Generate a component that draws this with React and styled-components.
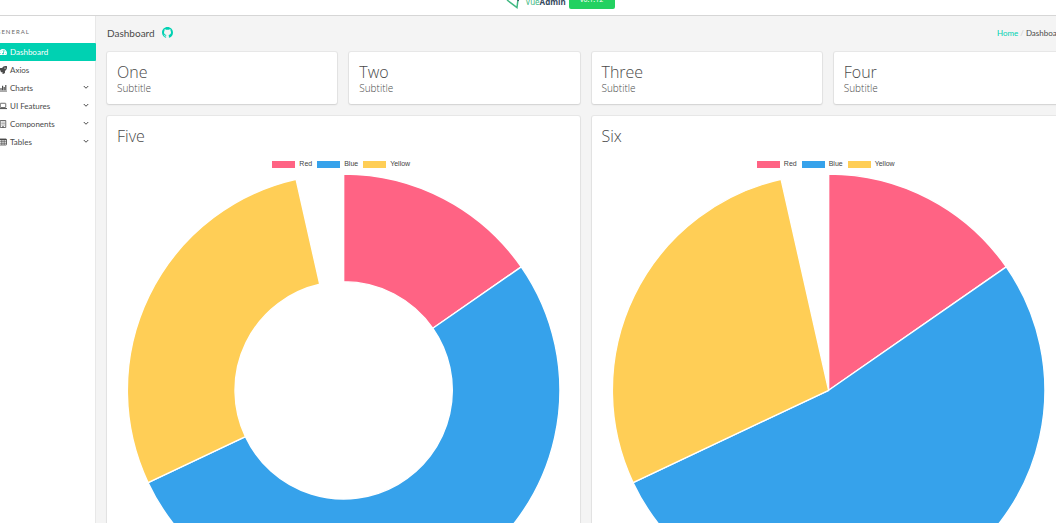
import React from "react";
import styled, { createGlobalStyle } from "styled-components";
import { FaTachometerAlt, FaRocket } from "react-icons/fa";

const GlobalStyle = createGlobalStyle`
  *, *::before, *::after { box-sizing: border-box; }
  body {
    margin: 0;
    background: #fff;
    color: #4a4a4a;
    font-family: Lato, "Noto Sans", sans-serif;
    font-size: 8px;
    overflow: hidden;
  }
  h1, h2, p, ul, ol { margin: 0; padding: 0; list-style: none; }
  a { text-decoration: none; color: inherit; }
`;

const Shell = styled.div`
  display: flex;
  flex-direction: column;
  height: 100vh;
  overflow: hidden;
`;

const Header = styled.header`
  flex: none;
  display: flex;
  justify-content: center;
  align-items: flex-end;
  height: 16px;
  padding: 0 0 6px 65px;
  background: #fff;
  border-bottom: 1px solid #d6d6d6;
`;

const Brand = styled.a`
  display: flex;
  align-items: flex-end;
  gap: 3px;
  font-family: "Noto Sans", sans-serif;
  line-height: 14px;
  color: #42b983;
  svg { display: block; }
  strong { color: #35495e; font-weight: 700; }
`;

const Version = styled.span`
  flex: none;
  width: 46px;
  height: 19px;
  border-radius: 2px;
  background: #23d160;
  color: #fff;
  font-size: 7px;
  line-height: 20px;
  text-align: center;
`;

const Body = styled.div`
  flex: 1;
  min-height: 0;
  display: flex;
  overflow: hidden;
`;

const Sidebar = styled.aside`
  flex: none;
  width: 96px;
  padding-top: 10px;
  background: #fff;
  box-shadow: inset -1px 0 0 #e8e8e8;
`;

const MenuLabel = styled.p`
  margin-left: -4px;
  height: 17px;
  font-size: 6px;
  line-height: 12px;
  letter-spacing: 1px;
  color: #6a6a6a;
  text-transform: uppercase;
`;

const MenuLink = styled.a`
  display: flex;
  align-items: center;
  gap: 3px;
  height: 18px;
  margin-left: -1px;
  padding-right: 6px;
  background: ${(p) => (p.$active ? "#00d1b2" : "transparent")};
  color: ${(p) => (p.$active ? "#fff" : "#4a4a4a")};
  border-radius: 1px;
  svg { flex: none; }
  span { flex: 1; }
`;

const Main = styled.main`
  flex: 1;
  min-width: 0;
  margin-right: -8px;
  padding: 0 0 0 11px;
  background: #f4f4f4;
`;

const TitleBar = styled.div`
  display: flex;
  align-items: center;
  justify-content: space-between;
  height: 36px;
  padding: 0 0 3px;
`;

const PageTitle = styled.h1`
  display: flex;
  align-items: center;
  gap: 7px;
  font-size: 10px;
  font-weight: 400;
  a { display: flex; color: #00d1b2; }
`;

const Crumbs = styled.ol`
  display: flex;
  gap: 2px;
  li + li::before { content: "/"; margin-right: 2px; color: #cfcfcf; }
  a { color: #00d1b2; }
`;

const Grid = styled.div`
  display: grid;
  grid-template-columns: repeat(4, 1fr);
  gap: 12px;
`;

const Card = styled.article`
  grid-column: span ${(p) => p.$span || 1};
  padding: 10px;
  background: #fff;
  border-radius: 2px;
  font-family: "Open Sans", "Noto Sans", sans-serif;
  box-shadow: 0 1px 2px rgba(10, 10, 10, 0.1), 0 0 0 1px rgba(10, 10, 10, 0.05);
`;

const CardTitle = styled.h2`
  font-size: 16px;
  font-weight: 300;
  line-height: 20px;
`;

const Subtitle = styled.p`
  font-size: 10px;
  font-weight: 300;
  line-height: 12px;
`;

const Legend = styled.ul`
  display: flex;
  justify-content: center;
  gap: 5px;
  margin: 12px 4px 4px 0;
  font-family: "Liberation Sans", sans-serif;
  font-size: 7px;
  line-height: 12px;
  color: #444;
`;

const LegendItem = styled.li`
  display: flex;
  align-items: center;
  gap: 4px;
  &::before { content: ""; width: 23px; height: 7px; background: ${(p) => p.$color}; }
`;

const Plot = styled.svg`
  display: block;
  width: 100%;
`;

const Footer = styled.footer`
  flex: none;
  height: 4px;
  background: #fff;
`;

function LineIcon({ size = 8, children }) {
  return (
    <svg width={size} height={size} viewBox="0 0 16 16" fill="none" stroke="currentColor" strokeWidth="1.600" aria-hidden="true">
      {children}
    </svg>
  );
}

function ChartIcon() {
  return (
    <LineIcon>
      <path d="M0.800 1V14.200H16" />
      <path d="M4 12.500V8M7.200 12.500V3.500M10.400 12.500V6M13.600 12.500V2" strokeWidth="2.300" />
    </LineIcon>
  );
}

function LaptopIcon() {
  return (
    <LineIcon>
      <rect x="2.500" y="2.500" width="11" height="8.500" rx="1" />
      <path d="M0 13.200H16" strokeWidth="2" />
    </LineIcon>
  );
}

function BuildingIcon() {
  return (
    <LineIcon>
      <path d="M2.500 1H13.500V15H2.500Z" />
      <path d="M5.200 4.200H11M5.200 7.200H11M5.200 10.200H11" strokeDasharray="1.400 0.800" />
      <path d="M8 12V15" strokeWidth="2.400" />
    </LineIcon>
  );
}

function TableIcon() {
  return (
    <LineIcon>
      <rect x="1" y="2" width="14" height="12" rx="1" />
      <path d="M1 3.200H15" strokeWidth="2.600" />
      <path d="M1 7.300H15M1 10.600H15M5.600 3V14M10.400 3V14" strokeWidth="1.300" />
    </LineIcon>
  );
}

function ChevronIcon() {
  return (
    <LineIcon>
      <path d="M3.500 4L8 8.500L12.500 4" strokeWidth="2" />
    </LineIcon>
  );
}

function GithubMark() {
  return (
    <svg width="11" height="11" viewBox="0 0 16 16" fill="currentColor" aria-hidden="true">
      <path d="M8 0C3.58 0 0 3.58 0 8c0 3.54 2.29 6.53 5.47 7.59.4.07.55-.17.55-.38 0-.19-.01-.82-.01-1.49-2.01.37-2.53-.49-2.69-.94-.09-.23-.48-.94-.82-1.13-.28-.15-.68-.52-.01-.53.63-.01 1.08.58 1.23.82.72 1.21 1.87.87 2.33.66.07-.52.28-.87.51-1.07-1.78-.2-3.64-.89-3.64-3.95 0-.87.31-1.59.82-2.15-.08-.2-.36-1.02.08-2.12 0 0 .67-.21 2.2.82a7.6 7.6 0 0 1 4 0c1.53-1.04 2.2-.82 2.2-.82.44 1.1.16 1.92.08 2.12.51.56.82 1.27.82 2.15 0 3.07-1.87 3.75-3.65 3.95.29.25.54.73.54 1.48 0 1.07-.01 1.93-.01 2.2 0 .21.15.46.55.38A8.01 8.01 0 0 0 16 8c0-4.42-3.58-8-8-8z" />
    </svg>
  );
}

const MENU = [
  { label: "Dashboard", icon: FaTachometerAlt, active: true },
  { label: "Axios", icon: FaRocket },
  { label: "Charts", icon: ChartIcon, nested: true },
  { label: "UI Features", icon: LaptopIcon, nested: true },
  { label: "Components", icon: BuildingIcon, nested: true },
  { label: "Tables", icon: TableIcon, nested: true },
];

const SLICES = [
  { label: "Red", color: "#ff6384", from: 0, to: 55.2 },
  { label: "Blue", color: "#36a2eb", from: 55.2, to: 244.7 },
  { label: "Yellow", color: "#ffce56", from: 244.7, to: 347.3 },
];

const CX = 227.4;
const CY = 217;
const R = 217;

function point(radius, degrees) {
  const a = (degrees * Math.PI) / 180;
  return `${(CX + radius * Math.sin(a)).toFixed(2)} ${(CY - radius * Math.cos(a)).toFixed(2)}`;
}

function slicePath({ from, to }, inner) {
  const large = to - from > 180 ? 1 : 0;
  const outer = `M${point(R, from)}A${R} ${R} 0 ${large} 1 ${point(R, to)}`;
  if (!inner) return `${outer}L${CX} ${CY}Z`;
  return `${outer}L${point(inner, to)}A${inner} ${inner} 0 ${large} 0 ${point(inner, from)}Z`;
}

function Chart({ name, inner = 0 }) {
  return (
    <>
      <Legend>
        {SLICES.map((s) => (
          <LegendItem key={s.label} $color={s.color}>{s.label}</LegendItem>
        ))}
      </Legend>
      <Plot viewBox="0 0 454 434" role="img" aria-label={name}>
        {SLICES.map((s) => (
          <path key={s.label} d={slicePath(s, inner)} fill={s.color} stroke="#fff" strokeWidth="1.4" strokeLinejoin="bevel" />
        ))}
      </Plot>
    </>
  );
}

export default function App() {
  return (
    <Shell>
      <GlobalStyle />
      <Header>
        <Brand href="#">
          <svg width="16" height="14" viewBox="0 0 16 14" fill="none" aria-hidden="true">
            <path d="M1 5L11 12.500L12.500 0" stroke="#42b983" strokeWidth="1.500" />
            <path d="M12 6L13 2" stroke="#35495e" strokeWidth="1.500" />
          </svg>
          <span>Vue<strong>Admin</strong></span>
          <Version>v0.1.12</Version>
        </Brand>
      </Header>
      <Body>
        <Sidebar>
          <MenuLabel>General</MenuLabel>
          <nav>
            {MENU.map(({ label, icon: Icon, active, nested }) => (
              <MenuLink key={label} href="#" $active={active}>
                <Icon size={8} />
                <span>{label}</span>
                {nested && <ChevronIcon />}
              </MenuLink>
            ))}
          </nav>
        </Sidebar>
        <Main>
          <TitleBar>
            <PageTitle>Dashboard<a href="#" aria-label="GitHub"><GithubMark /></a></PageTitle>
            <Crumbs>
              <li><a href="#">Home</a></li>
              <li>Dashboard</li>
            </Crumbs>
          </TitleBar>
          <Grid>
            {["One", "Two", "Three", "Four"].map((t) => (
              <Card key={t}>
                <CardTitle>{t}</CardTitle>
                <Subtitle>Subtitle</Subtitle>
              </Card>
            ))}
            <Card $span={2}>
              <CardTitle>Five</CardTitle>
              <Chart name="Five" inner={109} />
            </Card>
            <Card $span={2}>
              <CardTitle>Six</CardTitle>
              <Chart name="Six" />
            </Card>
          </Grid>
        </Main>
      </Body>
      <Footer />
    </Shell>
  );
}
